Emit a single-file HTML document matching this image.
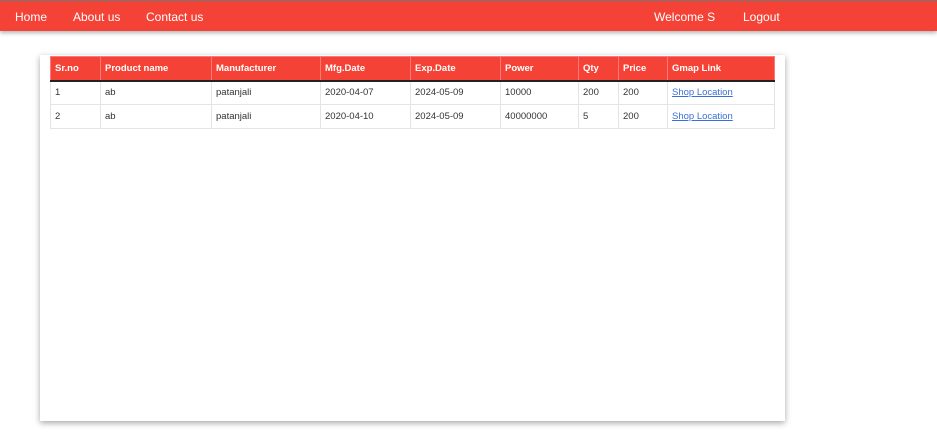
<!DOCTYPE html>
<html><head><style>
body{margin:0;background:#fff;font-family:"Liberation Sans",sans-serif;width:937px;height:434px;overflow:hidden;position:relative}
.nav{position:absolute;top:0;left:0;width:937px;height:31px;background:#f44336;border-top:1px solid #777;box-sizing:border-box;box-shadow:0 2px 4px rgba(0,0,0,.3);color:#fff;font-size:12px}
.nav span{position:absolute;top:9px}
.card{position:absolute;left:40px;top:55px;width:745px;height:366px;background:#fff;box-shadow:0 2px 6px rgba(0,0,0,.35)}
table{position:absolute;left:10px;top:1px;border-collapse:collapse;font-size:9.5px;width:724px;table-layout:fixed}
th{background:#f44336;color:#fff;text-align:left;height:24px;padding:0 4px;border:1px solid #f77;border-bottom:2px solid #222;font-weight:bold;box-sizing:border-box}
td{height:24px;padding:0 4px;border:1px solid #e2e4e8;color:#333;box-sizing:border-box}
a{color:#3a6fd8}
</style></head><body>
<div class="nav"><span style="left:15px">Home</span><span style="left:73px">About us</span><span style="left:146px">Contact us</span><span style="left:654px">Welcome S</span><span style="left:743px">Logout</span></div>
<div class="card"><table>
<colgroup><col style="width:50px"><col style="width:111px"><col style="width:109px"><col style="width:90px"><col style="width:90px"><col style="width:78px"><col style="width:40px"><col style="width:49px"><col style="width:107px"></colgroup>
<tr><th>Sr.no</th><th>Product name</th><th>Manufacturer</th><th>Mfg.Date</th><th>Exp.Date</th><th>Power</th><th>Qty</th><th>Price</th><th>Gmap Link</th></tr>
<tr><td>1</td><td>ab</td><td>patanjali</td><td>2020-04-07</td><td>2024-05-09</td><td>10000</td><td>200</td><td>200</td><td><a href="#">Shop Location</a></td></tr>
<tr><td>2</td><td>ab</td><td>patanjali</td><td>2020-04-10</td><td>2024-05-09</td><td>40000000</td><td>5</td><td>200</td><td><a href="#">Shop Location</a></td></tr>
</table></div>
</body></html>
